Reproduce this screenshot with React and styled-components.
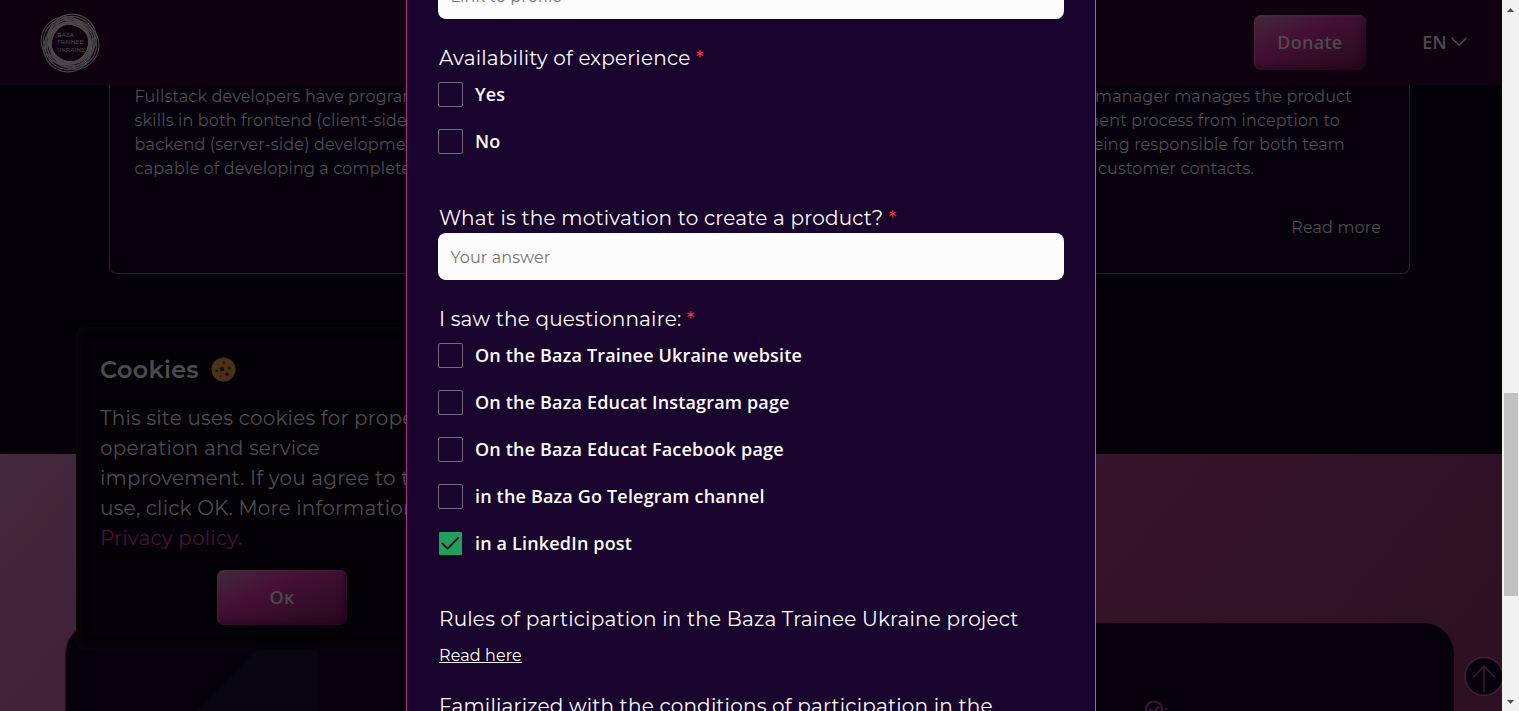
import React from 'react';
import styled, { createGlobalStyle, css } from 'styled-components';

const Global = createGlobalStyle`
  *, *::before, *::after { box-sizing: border-box; }
  body { margin: 0; background: #030107; overflow: hidden; }
  p, h2, ul { margin: 0; padding: 0; font-weight: inherit; }
`;

const display = css`font-family: Montserrat, Inter, sans-serif;`;
const ui = css`font-family: 'Open Sans', 'Noto Sans', sans-serif;`;

const Shell = styled.div`
  display: grid;
  grid-template-columns: 1502px 17px;
  width: 1519px;
  height: 711px;
  overflow: hidden;
`;

const Viewport = styled.div`
  position: relative;
  height: 711px;
  overflow: hidden;
  display: flex;
  flex-direction: column;
  background: #030107;
  color: #4b4b4b;
`;

const Header = styled.header`
  flex: none;
  display: flex;
  align-items: center;
  height: 85px;
  padding: 0 35.5px 0 40px;
  background: #0f0110;
  svg { display: block; }
`;

const Spacer = styled.div`flex: 1;`;

const GlowButton = styled.button`
  ${ui}
  width: ${(p) => p.$width}px;
  height: 55px;
  padding: 0 0 ${(p) => p.$lift || 0}px;
  border: 0;
  border-radius: 7px;
  color: #4d4a4c;
  font-size: 18px;
  font-weight: 600;
  letter-spacing: 0.3px;
  background: linear-gradient(158deg, #43293b 2%, #450f35 38%, #310d26 72%, #2a061e 100%);
  box-shadow: inset 1px 1px 3px rgba(90, 60, 80, 0.4), inset -3px -3px 6px rgba(30, 2, 22, 0.5);
`;

const Language = styled.div`
  ${ui}
  display: flex;
  align-items: center;
  gap: 4px;
  margin-left: 56.5px;
  padding-bottom: 1px;
  font-size: 18px;
  font-weight: 600;
`;

const Cards = styled.section`
  flex: none;
  display: flex;
  justify-content: space-between;
  align-items: flex-start;
  height: 369px;
  padding: 0 92px 0 109px;
`;

const Card = styled.article`
  ${display}
  display: flex;
  flex-direction: column;
  width: 417px;
  height: 189px;
  padding: 0 28px 0 24.6px;
  border: 1px solid #3a1232;
  border-top: 0;
  border-radius: 0 0 8px 8px;
  background: #06010d;
  color: #4e4d4f;
  font-size: 16px;
  line-height: 24px;
  letter-spacing: 0.16px;
`;

const Line = styled.p`
  white-space: nowrap;
  ${(p) => p.$end && css`display: flex; justify-content: flex-end; width: ${p.$end}px;`}
`;

const More = styled.a`
  align-self: flex-end;
  margin-top: 35px;
`;

const Band = styled.section`
  position: relative;
  flex: 1;
  padding: 168px 47px 0 65px;
  background: linear-gradient(130deg, #432a3c 0%, #402236 14%, #3b1730 45%, #341329 68%, #2d1022 95%);
`;

const Panel = styled.div`
  display: flex;
  height: 200px;
  overflow: hidden;
  border: 1px solid #2f1028;
  border-radius: 32px;
  background: #06010d;
`;

const Shape = styled.svg`margin-left: 99px; flex: none;`;
const Badge = styled.svg`margin: 76px 0 0 827px; flex: none;`;

const ToTop = styled.button`
  position: absolute;
  left: 1464px;
  top: 656px;
  width: 40px;
  height: 41px;
  padding: 0;
  border: 0;
  background: none;
  svg { display: block; }
`;

const CookieBox = styled.aside`
  ${display}
  position: absolute;
  left: 76px;
  top: 327px;
  display: flex;
  flex-direction: column;
  width: 412px;
  height: 323px;
  padding: 23px 24px 0;
  border-radius: 8px;
  background: #040107;
  box-shadow: inset 0 0 12px rgba(24, 20, 26, 0.5);
  color: #4e4d4f;
`;

const CookieTitle = styled.h2`
  display: flex;
  align-items: center;
  gap: 12px;
  height: 38px;
  margin-bottom: 15px;
  font-size: 24px;
  font-weight: 600;
  letter-spacing: 0.25px;
  color: #4c4b4c;
`;

const CookieText = styled.div`
  height: 150px;
  margin-bottom: 17.4px;
  font-size: 20px;
  line-height: 30px;
  letter-spacing: 0.2px;
`;

const Policy = styled.a`color: #4c113c;`;

const Centered = styled.div`display: flex; justify-content: center;`;

const Modal = styled.div`
  ${display}
  position: absolute;
  left: 406px;
  top: 0;
  display: flex;
  flex-direction: column;
  width: 690px;
  height: 711px;
  overflow: hidden;
  padding: 0 31px 0 31.4px;
  border: solid #a83488;
  border-width: 0 1px;
  border-right-color: #c44fa6;
  background: #18042d;
  color: #fcfcfc;
`;

const Field = styled.input`
  ${display}
  flex: none;
  width: 625.6px;
  height: 47px;
  margin-top: ${(p) => p.$top || 0}px;
  margin-bottom: 24px;
  padding: 1px 12px 0;
  border: 0;
  border-radius: 8px;
  background: #fcfcfc;
  font-size: 16px;
  letter-spacing: 0.15px;
  &::placeholder { color: #757575; opacity: 1; }
`;

const Label = styled.div`
  flex: none;
  height: 30px;
  padding-left: 0.6px;
  font-size: 20px;
  line-height: 30px;
  letter-spacing: 0.2px;
  white-space: nowrap;
`;

const Required = styled.span`color: #ff3b3b;`;

const Options = styled.div`
  ${ui}
  flex: none;
  display: flex;
  flex-direction: column;
  gap: 22px;
  padding-top: ${(p) => p.$top || 9}px;
  margin-bottom: ${(p) => p.$bottom || 49}px;
`;

const Option = styled.label`
  display: flex;
  align-items: center;
  gap: 12px;
  height: 25px;
  font-size: 18px;
  font-weight: 600;
  line-height: 22px;
  letter-spacing: 0.17px;
  white-space: nowrap;
`;

const Caption = styled.span`
  padding-bottom: 2px;
`;

const Box = styled.span`
  display: flex;
  width: 24.6px;
  height: 25px;
  border: 1px solid ${(p) => (p.$on ? 'transparent' : '#75697f')};
  border-radius: 2px;
  background: ${(p) => (p.$on ? '#1fa05c' : 'transparent')};
  background-clip: padding-box;
`;

const RulesLink = styled.a`
  align-self: flex-start;
  margin: 10px 0 23px 0.6px;
  font-size: 16px;
  line-height: 24px;
  letter-spacing: 0.12px;
  text-decoration: underline;
`;

const Track = styled.div`
  display: flex;
  flex-direction: column;
  align-items: center;
  padding: 8px 0 7px;
  background: #f1f1f1;
  height: 711px;
`;

const Thumb = styled.div`
  width: 14px;
  height: 203px;
  margin: 381px 0 auto 1px;
  background: #c1c1c1;
`;

const Arrow = styled.svg`display: block; flex: none;`;

const directions = [-65, 25, 115, 205];
const radii = [20.2, 21.5, 22.8, 24];

function Logo() {
  return (
    <svg width="60" height="60" viewBox="0 0 60 60" fill="none" stroke="#4b474b" strokeWidth="1.05">
      {directions.map((deg) =>
        radii.map((r) => {
          const a = (deg * Math.PI) / 180;
          const o = r - 18.6;
          return <circle key={`${deg}-${r}`} cx={30 + o * Math.cos(a)} cy={30 + o * Math.sin(a)} r={r} />;
        })
      )}
      <g fill="#4b474b" stroke="none" fontFamily="Montserrat, sans-serif" fontSize="6" fontWeight="500">
        <text x="17" y="23.5" textLength="17">BAZA</text>
        <text x="17" y="31.3" textLength="26.5">TRAINEE</text>
        <text x="17" y="39" textLength="28">UKRAINE</text>
      </g>
    </svg>
  );
}

function CookieIcon() {
  return (
    <svg width="25" height="25" viewBox="0 0 25 25">
      <circle cx="12.5" cy="12.5" r="12" fill="#4a3218" />
      <g fill="#1d110b">
        <circle cx="11" cy="12" r="2.3" />
        <circle cx="12.7" cy="5.6" r="1.4" />
        <circle cx="18.3" cy="11.2" r="1.4" />
        <circle cx="16" cy="17.3" r="1.9" />
        <circle cx="5.6" cy="13.8" r="1.4" />
        <circle cx="9.6" cy="19" r="1" />
      </g>
    </svg>
  );
}

function Choice({ checked, children }) {
  return (
    <Option>
      <Box $on={checked}>
        {checked && (
          <svg width="23" height="23" viewBox="0 0 23 23" fill="none" stroke="#0b0716" strokeWidth="1.7">
            <path d="M2.8 10.8 L8.8 16.6 L20 5.2" />
          </svg>
        )}
      </Box>
      <Caption>{children}</Caption>
    </Option>
  );
}

export default function App() {
  return (
    <Shell>
      <Global />
      <Viewport>
        <Header>
          <Logo />
          <Spacer />
          <GlowButton $width={112} $lift={1}>Donate</GlowButton>
          <Language>
            EN
            <svg width="16" height="10" viewBox="0 0 16 10" fill="none" stroke="#4b4b4b" strokeWidth="1.4">
              <path d="M0.8 1 L8 8.2 L15.2 1" />
            </svg>
          </Language>
        </Header>

        <Cards>
          <Card>
            <Line>Fullstack developers have program</Line>
            <Line>skills in both frontend (client-side)</Line>
            <Line>backend (server-side) development</Line>
            <Line>capable of developing a complete</Line>
          </Card>
          <Card>
            <Line $end={333.4}>Project manager manages the product</Line>
            <Line $end={321.4}>development process from inception to</Line>
            <Line $end={326.4}>end, being responsible for both team</Line>
            <Line $end={235.4}>work and customer contacts.</Line>
            <More>Read more</More>
          </Card>
        </Cards>

        <Band>
          <Panel>
            <Shape width="152" height="130" viewBox="0 0 152 130">
              <path d="M118 0 H152 V130 H0 V118 L33 87 Z" fill="#0a0512" />
            </Shape>
            <Badge width="30" height="20" viewBox="0 0 30 20" fill="none" stroke="#3f1436" strokeWidth="2.2">
              <circle cx="10" cy="10.5" r="8" />
              <path d="M5.5 10 l4 3.5 5.5 -6" />
              <path d="M21 10 h2.5" />
            </Badge>
          </Panel>
        </Band>

        <ToTop>
          <svg width="40" height="41" viewBox="0 0 40 41" fill="none" stroke="#451a3b" strokeWidth="1.5">
            <circle cx="20" cy="20.5" r="19" fill="#06010d" />
            <path d="M20 36 V10 M9.3 21.5 L20 10 L31 21.5" strokeWidth="1.3" />
          </svg>
        </ToTop>

        <CookieBox>
          <CookieTitle>
            Cookies <CookieIcon />
          </CookieTitle>
          <CookieText>
            <Line>This site uses cookies for proper</Line>
            <Line>operation and service</Line>
            <Line>improvement. If you agree to their</Line>
            <Line>use, click OK. More information</Line>
            <Policy>Privacy policy.</Policy>
          </CookieText>
          <Centered>
            <GlowButton $width={130} $lift={2}>Oк</GlowButton>
          </Centered>
        </CookieBox>

        <Modal>
          <Field $top={-28} placeholder="Link to profile" />
          <Label>Availability of experience <Required>*</Required></Label>
          <Options>
            <Choice>Yes</Choice>
            <Choice>No</Choice>
          </Options>
          <Label>What is the motivation to create a product? <Required>*</Required></Label>
          <Field placeholder="Your answer" />
          <Label>I saw the questionnaire: <Required>*</Required></Label>
          <Options $top={9.4} $bottom={47.6}>
            <Choice>On the Baza Trainee Ukraine website</Choice>
            <Choice>On the Baza Educat Instagram page</Choice>
            <Choice>On the Baza Educat Facebook page</Choice>
            <Choice>in the Baza Go Telegram channel</Choice>
            <Choice checked>in a LinkedIn post</Choice>
          </Options>
          <Label>Rules of participation in the Baza Trainee Ukraine project</Label>
          <RulesLink>Read here</RulesLink>
          <Label>Familiarized with the conditions of participation in the</Label>
        </Modal>
      </Viewport>

      <Track>
        <Arrow width="7" height="4" viewBox="0 0 7 4"><path d="M0 4 L3.5 0 L7 4 Z" fill="#505050" /></Arrow>
        <Thumb />
        <Arrow width="7" height="4" viewBox="0 0 7 4"><path d="M0 0 L3.5 4 L7 0 Z" fill="#505050" /></Arrow>
      </Track>
    </Shell>
  );
}
